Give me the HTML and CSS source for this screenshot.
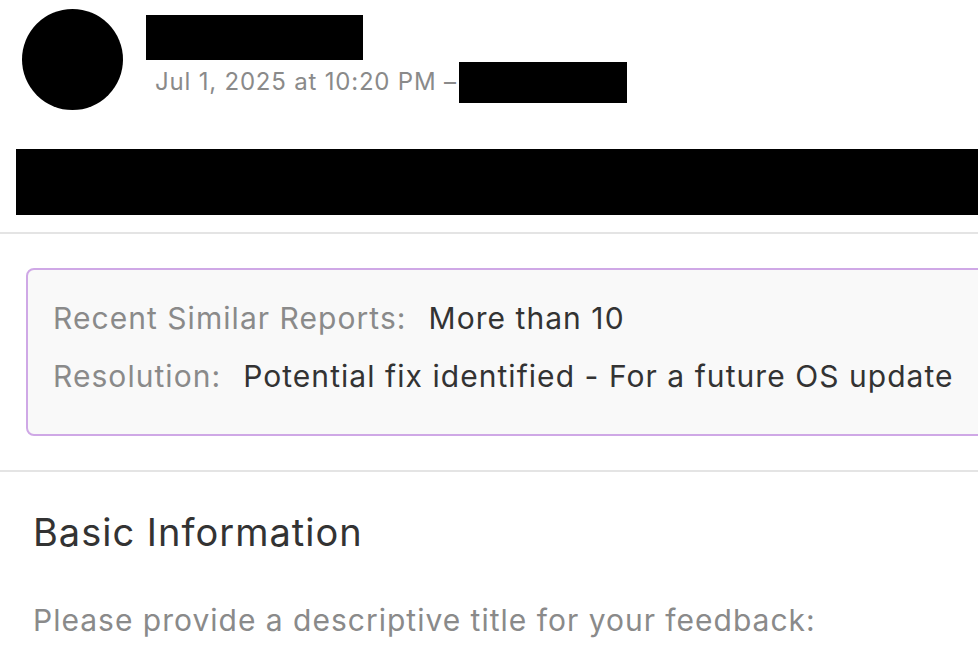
FILE: index.html
```html
<!DOCTYPE html>
<html>
<head>
<meta charset="utf-8">
<link rel="stylesheet" href="styles.css">
</head>
<body>
<div class="page">
  <header class="header">
    <div class="avatar"></div>
    <div class="meta">
      <div class="redact name"></div>
      <div class="dateline"><span class="date">Jul 1, 2025 at 10:20 PM –</span><span class="redact who"></span></div>
    </div>
  </header>
  <div class="redact titlebar"></div>
  <hr class="divider first">
  <section class="card">
    <div class="row"><span class="label">Recent Similar Reports:</span><span class="value">More than 10</span></div>
    <div class="row"><span class="label">Resolution:</span><span class="value">Potential fix identified - For a future OS update</span></div>
  </section>
  <hr class="divider second">
  <h2 class="section-title">Basic Information</h2>
  <p class="prompt">Please provide a descriptive title for your feedback:</p>
</div>
</body>
</html>
```

FILE: styles.css
```css
html, body {
  margin: 0;
  padding: 0;
  background: #ffffff;
  overflow: hidden;
}
.page {
  width: 978px;
  height: 646px;
  overflow: hidden;
  font-family: "Inter", "Roboto", sans-serif;
}
.redact { background: #000; }
.header {
  display: flex;
  padding: 9px 0 0 22px;
}
.avatar {
  width: 101px;
  height: 101px;
  border-radius: 50%;
  background: #000;
  flex: none;
}
.meta {
  margin-left: 23px;
  padding-top: 6px;
}
.name {
  width: 217px;
  height: 45px;
}
.dateline {
  display: flex;
  align-items: flex-start;
  margin-top: 2px;
}
.date {
  width: 304px;
  margin: 5px 0 0 9px;
  font-size: 24px;
  line-height: 30px;
  color: #8a8a8a;
  letter-spacing: 0.8px;
  white-space: nowrap;
  overflow: hidden;
}
.who {
  width: 168px;
  height: 41px;
  flex: none;
}
.titlebar {
  margin: 39px 0 0 16px;
  width: 980px;
  height: 66px;
}
.divider {
  border: 0;
  height: 2px;
  background: #e4e4e4;
  margin: 0;
}
.divider.first { margin-top: 17px; }
.card {
  margin: 34px 0 0 26px;
  width: 980px;
  height: 168px;
  border: 2px solid #cfa8e6;
  border-radius: 8px;
  background: #f9f9f9;
  padding: 19px 0 0 25px;
  box-sizing: border-box;
}
.row {
  font-size: 30px;
  line-height: 58px;
  white-space: nowrap;
  letter-spacing: 1.05px;
}
.label { color: #8a8a8a; margin-right: 22px; }
.value { color: #333333; }
.divider.second { margin-top: 34px; }
.section-title {
  margin: 36px 0 0 33px;
  font-size: 38px;
  font-weight: 400;
  line-height: 48px;
  color: #333333;
  letter-spacing: 1px;
}
.prompt {
  margin: 44px 0 0 33px;
  font-size: 30px;
  line-height: 40px;
  color: #8a8a8a;
  letter-spacing: 1px;
}
```
